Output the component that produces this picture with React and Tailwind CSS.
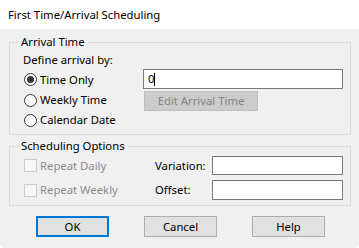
import { useState } from "react";

function Radio({ label, checked, onClick }) {
	return (
		<div className="flex items-center h-full cursor-default" onClick={onClick}>
			<span className="w-[13px] h-[13px] rounded-full border border-[#333333] bg-white flex items-center justify-center shrink-0">
				{checked && <span className="w-[7px] h-[7px] rounded-full bg-[#333333]" />}
			</span>
			<span className="ml-[3px]">{label}</span>
		</div>
	);
}

function Check({ label }) {
	return (
		<div className="flex items-center w-[131px] text-[#8d8d8d]">
			<span className="w-[13px] h-[13px] border border-[#cccccc] bg-[#f7f7f7] shrink-0" />
			<span className="ml-[3px]">{label}</span>
		</div>
	);
}

function Button({ children, primary }) {
	return (
		<button
			type="button"
			className={`w-[73px] h-[21px] bg-[#e1e1e1] flex items-center justify-center ${
				primary ? "border-2 border-[#0078d7]" : "border border-[#adadad]"
			}`}
		>
			{children}
		</button>
	);
}

export default function App() {
	const [mode, setMode] = useState("time");

	return (
		<div className="w-[359px] h-[248px] flex flex-col bg-white text-black text-[11.3px] leading-[14px] font-['Noto_Sans',sans-serif]">
			<div className="h-[29px] pl-[8px] flex items-center">First Time/Arrival Scheduling</div>

			<div className="flex-1 bg-[#f0f0f0] pt-[6px] pl-[9px] pr-[8px] rounded-b-[5px]">
				<fieldset className="border border-[#dcdcdc]">
					<legend className="ml-[9px] px-[2px] leading-[14px]">Arrival Time</legend>
					<div className="pl-[14px] pr-[6px] pb-[4px]">
						<div className="mt-[4px] h-[14px] -ml-[1px]">Define arrival by:</div>
						<div className="mt-[2px] flex">
							<div className="w-[119px] flex flex-col">
								<div className="h-[21px]">
									<Radio label="Time Only" checked={mode === "time"} onClick={() => setMode("time")} />
								</div>
								<div className="h-[20px]">
									<Radio label="Weekly Time" checked={mode === "weekly"} onClick={() => setMode("weekly")} />
								</div>
								<div className="h-[20px]">
									<Radio label="Calendar Date" checked={mode === "calendar"} onClick={() => setMode("calendar")} />
								</div>
							</div>
							<div className="w-[200px] flex flex-col">
								<div className="h-[20px] border border-[#7a7a7a] bg-white flex items-center pl-[4px]">
									<span>0</span>
									<span className="w-[1px] h-[13px] bg-black" />
								</div>
								<button
									type="button"
									disabled
									className="mt-[2px] ml-[1px] w-[114px] h-[20px] bg-[#cccccc] border border-[#bfbfbf] text-[#838383] flex items-center justify-center"
								>
									Edit Arrival Time
								</button>
							</div>
						</div>
					</div>
				</fieldset>

				<fieldset className="mt-[4px] border border-[#dcdcdc]">
					<legend className="ml-[9px] px-[2px] leading-[14px]">Scheduling Options</legend>
					<div className="pl-[14px] pr-[6px] pb-[5px] mt-[3px] flex flex-col gap-[5px]">
						<div className="h-[19px] flex items-center">
							<Check label="Repeat Daily" />
							<span className="w-[57px]">Variation:</span>
							<div className="w-[131px] h-full border border-[#7a7a7a] bg-white" />
						</div>
						<div className="h-[20px] flex items-center">
							<Check label="Repeat Weekly" />
							<span className="w-[57px]">Offset:</span>
							<div className="w-[131px] h-full border border-[#7a7a7a] bg-white" />
						</div>
					</div>
				</fieldset>

				<div className="mt-[10px] pl-[27px] flex gap-[35px]">
					<Button primary>OK</Button>
					<Button>Cancel</Button>
					<Button>Help</Button>
				</div>
			</div>
		</div>
	);
}
